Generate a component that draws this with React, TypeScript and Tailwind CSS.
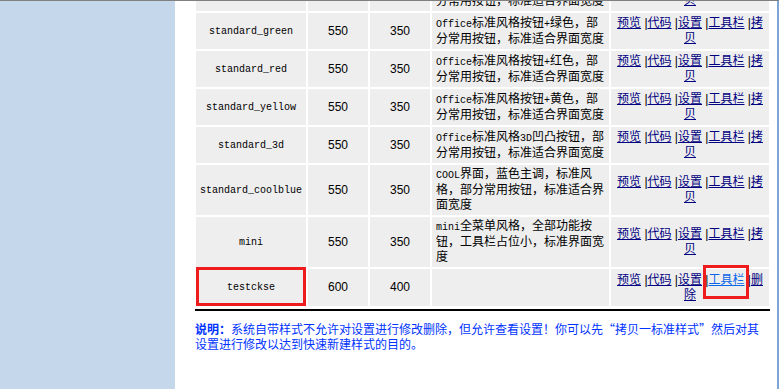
import React from "react";

type Row = { name: string; w: number; h: number; desc: string[]; tall?: boolean };

const rows: Row[] = [
  { name: "standard", w: 550, h: 350, desc: ["Office标准风格按钮+蓝色，部", "分常用按钮，标准适合界面宽度"] },
  { name: "standard_green", w: 550, h: 350, desc: ["Office标准风格按钮+绿色，部", "分常用按钮，标准适合界面宽度"] },
  { name: "standard_red", w: 550, h: 350, desc: ["Office标准风格按钮+红色，部", "分常用按钮，标准适合界面宽度"] },
  { name: "standard_yellow", w: 550, h: 350, desc: ["Office标准风格按钮+黄色，部", "分常用按钮，标准适合界面宽度"] },
  { name: "standard_3d", w: 550, h: 350, desc: ["Office标准风格3D凹凸按钮，部", "分常用按钮，标准适合界面宽度"] },
  { name: "standard_coolblue", w: 550, h: 350, desc: ["COOL界面，蓝色主调，标准风", "格，部分常用按钮，标准适合界", "面宽度"], tall: true },
  { name: "mini", w: 550, h: 350, desc: ["mini全菜单风格，全部功能按", "钮，工具栏占位小，标准界面宽", "度"], tall: true },
];

// latin runs in the narrow mono face, like the old bitmap font
function Mixed({ text }: { text: string }) {
  const parts = text.split(/([\x20-\x7e]+)/).filter(Boolean);
  return (
    <>
      {parts.map((p, i) =>
        /^[\x20-\x7e]+$/.test(p) ? (
          <span key={i} className="font-['Liberation_Mono',monospace] text-[10px]">{p}</span>
        ) : (
          <span key={i}>{p}</span>
        )
      )}
    </>
  );
}

const cell = "bg-[#eeeeee] p-0 align-middle";
const link = "text-[#000080] underline";

function Links() {
  return (
    <td className={cell + " text-center whitespace-nowrap"}>
      <a href="#" className={link}>预览</a> |<a href="#" className={link}>代码</a> |<a href="#" className={link}>设置</a> |<a href="#" className={link}>工具栏</a> |<a href="#" className={link}>拷<br />贝</a>
    </td>
  );
}

export default function App() {
  return (
    <div className="w-[779px] h-[389px] overflow-hidden bg-white border-t border-[#808080] flex font-['Liberation_Sans','Noto_Sans_CJK_SC',sans-serif] text-[12px] leading-[15px] text-black">
      <aside className="w-[175px] shrink-0 bg-[#c5d7ea]" />
      <main className="w-[577px] shrink-0 ml-[19px] flex flex-col">
        <table className="table-fixed border-separate border-spacing-[2px] w-[577px] mt-[-28px]">
          <colgroup>
            <col className="w-[110px]" />
            <col className="w-[60px]" />
            <col className="w-[60px]" />
            <col className="w-[177px]" />
            <col className="w-[158px]" />
          </colgroup>
          <tbody>
            {rows.map((r) => (
              <tr key={r.name} className={r.tall ? "h-[50px]" : "h-[36px]"}>
                <td className={cell + " text-center font-['Liberation_Mono',monospace] text-[10px]"}>{r.name}</td>
                <td className={cell + " text-center"}>{r.w}</td>
                <td className={cell + " text-center"}>{r.h}</td>
                <td className={cell + " pl-[4px] whitespace-nowrap"}>
                  {r.desc.map((d, i) => (
                    <div key={i}>
                      <Mixed text={d} />
                    </div>
                  ))}
                </td>
                <Links />
              </tr>
            ))}
            <tr className="h-[37px]">
              <td className={cell + " relative text-center font-['Liberation_Mono',monospace] text-[10px]"}>
                testckse
                <span className="absolute inset-x-0 top-[-2px] bottom-0 border-[3px] border-[#ee1c1c]" />
              </td>
              <td className={cell + " text-center"}>600</td>
              <td className={cell + " text-center"}>400</td>
              <td className={cell}></td>
              <td className={cell + " text-center whitespace-nowrap"}>
                <a href="#" className={link}>预览</a> |<a href="#" className={link}>代码</a> |<a href="#" className={link}>设置</a> |<span className="relative inline-block"><a href="#" className="text-[#0a66e8] underline">工具栏</a><span className="absolute left-[-5px] right-[-5px] top-[-8px] bottom-[-11px] border-[3px] border-[#ee1c1c]" /></span> |<a href="#" className={link}>删<br />除</a>
              </td>
            </tr>
          </tbody>
        </table>
        <div className="mt-[1px] mx-[1px] h-[2px] bg-black" />
        <p className="mt-[10px] ml-[1px] whitespace-nowrap text-[#0033ff] font-['Noto_Sans_CJK_SC',sans-serif]">
          <b>说明：</b>系统自带样式不允许对设置进行修改删除，但允许查看设置！你可以先“拷贝一标准样式”然后对其
          <br />
          设置进行修改以达到快速新建样式的目的。
        </p>
      </main>
      <div className="flex-1" />
      <div className="w-[2px] bg-[#7fa5d6]" />
    </div>
  );
}
